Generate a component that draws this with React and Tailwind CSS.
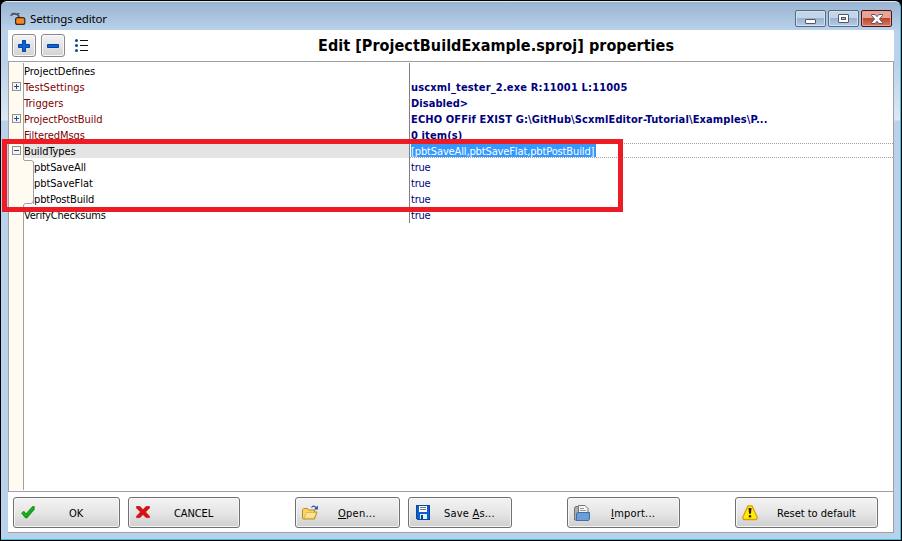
import React from "react";

const rows = [
  { name: "ProjectDefines", value: "" },
  { name: "TestSettings", red: true, sign: "+", bold: true, value: "uscxml_tester_2.exe R:11001 L:11005", nameTrack: "tracking-[0.08px]", track: "tracking-[0.17px]" },
  { name: "Triggers", red: true, bold: true, value: "Disabled>", nameTrack: "tracking-[0.05px]", track: "tracking-[0.05px]" },
  { name: "ProjectPostBuild", red: true, sign: "+", bold: true, value: "ECHO OFFif EXIST G:\\GitHub\\ScxmlEditor-Tutorial\\Examples\\P...", nameTrack: "tracking-[-0.06px]", track: "tracking-[0.12px]" },
  { name: "FilteredMsgs", red: true, bold: true, value: "0 item(s)", nameTrack: "tracking-[-0.08px]", track: "tracking-[0.12px]" },
  { name: "BuildTypes", sign: "-", selected: true, value: "[pbtSaveAll,pbtSaveFlat,pbtPostBuild]", nameTrack: "tracking-[-0.1px]", track: "tracking-[-0.13px]" },
  { name: "pbtSaveAll", child: true, value: "true", nameTrack: "tracking-[-0.1px]", track: "tracking-[-0.2px]" },
  { name: "pbtSaveFlat", child: true, value: "true", nameTrack: "tracking-[-0.03px]", track: "tracking-[-0.2px]" },
  { name: "pbtPostBuild", child: true, value: "true", nameTrack: "tracking-[-0.15px]", track: "tracking-[-0.2px]" },
  { name: "VerifyChecksums", value: "true", nameTrack: "tracking-[-0.2px]", track: "tracking-[-0.2px]" },
];

function Sign({ kind }) {
  return (
    <svg className="block h-[9px] w-[9px]" viewBox="0 0 9 9" shapeRendering="crispEdges">
      <rect x="0.5" y="0.5" width="8" height="8" fill="#f4f4f4" stroke="#919191" />
      <path d={kind === "+" ? "M2 4.5h5M4.5 2v5" : "M2 4.5h5"} stroke="#26479c" />
    </svg>
  );
}

function Row({ row }) {
  return (
    <div className="flex h-4 leading-[18px]">
      <div className="w-[14px] bg-[#fffbf0] pl-[3px] pt-[3px]">{row.sign && <Sign kind={row.sign} />}</div>
      <div className={"w-px " + (row.child ? "bg-[#fffbf0]" : "bg-[#a0a0a0]")} />
      {row.child && <div className="w-[10px] border-r border-[#a0a0a0] bg-[#fffbf0]" />}
      <div
        className={
          "whitespace-pre " +
          (row.child ? "w-[375px] " : "w-[385px] ") +
          (row.selected ? "h-[15px] bg-[#e4e4e4] " : "") +
          (row.red ? "text-[#800000] " : "text-black ") +
          (row.nameTrack || "")
        }
      >
        {row.name}
      </div>
      <div className="w-px bg-[#808080]" />
      <div
        className={
          "flex-1 whitespace-pre pl-px text-[#000080] " +
          (row.bold ? "font-bold " : "") +
          (row.selected ? "h-[15px] border-y border-dotted border-[#a0a0a0] leading-[16px] " : "") +
          (row.track || "")
        }
      >
        {row.selected ? <span className="block h-[13px] w-[185px] bg-[#3399ff] text-white">{row.value}</span> : row.value}
      </div>
    </div>
  );
}

function Tree() {
  return (
    <div className="relative flex h-[431px] flex-col border border-[#a0a0a0] pt-px">
      {rows.map((r) => (
        <Row key={r.name} row={r} />
      ))}
      <div className="flex h-[267px]">
        <div className="w-[15px] border-r border-[#a0a0a0] bg-[#fffbf0]" />
      </div>
      {/* rounded ends of the child bracket */}
      <svg className="absolute left-[14px] top-[97px] h-[49px] w-[12px]" viewBox="0 0 12 49" fill="none">
        <path d="M1 0h11v4H1z" fill="#fff" />
        <path d="M1 44h11v5H1z" fill="#fff" />
        <path d="M0 0 Q0.5 1.5 2 1.5 H8 Q10.500 1.500 10.500 4 V41 Q10.500 44.500 8 44.500 H2.500 Q0.500 44.500 0.500 47 V49 H0 Z" fill="#fffbf0" />
        <path d="M0.500 0 Q0.500 1.500 2 1.500 H8 Q10.500 1.500 10.500 4" stroke="#a0a0a0" />
        <path d="M10.500 41 Q10.500 44.500 8 44.500 H2.500 Q0.500 44.500 0.500 47 V49" stroke="#a0a0a0" />
      </svg>
      <div className="absolute left-[24px] top-[100px] h-[42px] w-px bg-[#a0a0a0]" />
    </div>
  );
}

function Button({ className, text, icon, iconClass }) {
  return (
    <div
      className={
        "flex h-[31px] items-center rounded-[3px] border border-[#707070] bg-linear-to-b from-[#f2f2f2] from-5% via-[#e6e6e6] via-50% to-[#cfcfcf] shadow-[inset_0_0_0_1px_#f6f6f6] " +
        className
      }
    >
      <div className={"w-4 shrink-0 " + iconClass}>{icon}</div>
      <div className="flex-1 whitespace-pre pt-0.5 leading-4">{text}</div>
    </div>
  );
}

function ToolButton({ children }) {
  return (
    <div className="flex h-[23px] w-6 items-center justify-center rounded-[3px] border border-[#8a8a8a] bg-linear-to-b from-[#f4f4f4] to-[#d2d2d2] shadow-[inset_0_0_0_1px_#f8f8f8]">
      {children}
    </div>
  );
}

const svg16 = { width: 16, height: 16, viewBox: "0 0 16 16", className: "block" };

const CheckIcon = () => (
  <svg {...svg16}>
    <path d="M1.500 8 L4 6.200 L6 8.800 L12.500 1.500 L14.300 1.500 L14.300 4.500 L7 13 L5.500 13 Z" fill="#0f9f0f" stroke="#0b860b" strokeWidth="0.6" />
    <path d="M3 7.500 L6 11 L13 3" stroke="#35c435" strokeWidth="0.8" fill="none" />
  </svg>
);

const CrossIcon = () => (
  <svg {...svg16}>
    <path d="M1.500 1.500 H5 L8 4.700 L11 1.500 H14.500 V3 L10.500 7 L14.500 11.300 V12.600 H11 L8 9.400 L5 12.600 H1.500 V11.300 L5.500 7 L1.500 3 Z" fill="#dc1010" stroke="#b00000" strokeWidth="0.6" />
  </svg>
);

const FolderIcon = () => (
  <svg {...svg16}>
    <path d="M0.500 13.500 V4.500 L1.500 3.500 H5.500 L6.500 5 H12.500 V7 H15 L12.500 14 H1.500 Z" fill="#f7d468" stroke="#b98a1c" />
    <path d="M2 13.300 L4.500 7.500 H14.500 L12 13.300 Z" fill="#ffe594" stroke="#d6a837" strokeWidth="0.7" />
    <path d="M9.500 2.500 Q11.500 -0.300 14 2.500" stroke="#164fa5" strokeWidth="1.200" fill="none" />
    <path d="M15.800 0.500 V4.500 H12 Z" fill="#164fa5" />
  </svg>
);

const SaveIcon = () => (
  <svg {...svg16} shapeRendering="crispEdges">
    <path d="M1 0h14v15H2l-1-1z" fill="#0a5fd0" />
    <path d="M1.500 0.500h13v14h-12l-1-1z" fill="none" stroke="#0a48a0" />
    <rect x="4" y="1" width="8" height="6" fill="#fff" />
    <path d="M5 2.500h6M5 4.500h6" stroke="#777" />
    <rect x="5" y="9" width="7" height="5" fill="#e8eef8" />
    <rect x="6" y="10" width="2" height="4" fill="#0a3c90" />
  </svg>
);

const ImportIcon = () => (
  <svg {...svg16}>
    <path d="M0.500 15 V3 L1.500 1.500 H5 V15 Z" fill="#a8adb3" stroke="#6b737c" />
    <path d="M4.500 8 V0.500 H11 L14 3.500 V8 Z" fill="#f4f4f4" stroke="#777" />
    <path d="M6 3.500h4M6 5.500h6" stroke="#999" />
    <path d="M2.500 15.500 V9 Q2.500 7.500 4 7.500 H15.500 V14 L14.500 15.500 Z" fill="#6c9dd4" stroke="#3f6da8" />
  </svg>
);

const WarningIcon = () => (
  <svg {...svg16}>
    <path d="M6 0.800 H10 L15.300 12.500 L14.500 14.500 H1.500 L0.700 12.500 Z" fill="#ffef00" stroke="#dd9a1c" strokeWidth="1.300" strokeLinejoin="round" />
    <path d="M6.500 3 H9.500 L9 8.800 H7 Z" fill="#332000" />
    <rect x="6.800" y="10.200" width="2.400" height="2.200" fill="#332000" />
  </svg>
);

function CaptionButton({ close, children }) {
  return (
    <div
      className={
        "flex h-[17px] w-[31px] items-center justify-center rounded-[2px] border " +
        (close
          ? "border-[#4a1016] bg-linear-to-b from-[#e6a697] from-45% via-[#bf4329] via-50% to-[#d5795f] shadow-[inset_0_0_0_1px_#e5a598]"
          : "border-[#566a84] bg-linear-to-b from-[#c3d5e9] from-45% via-[#9ab3cf] via-50% to-[#b5cce5] shadow-[inset_0_0_0_1px_#d3e1f0]")
      }
    >
      {children}
    </div>
  );
}

function TitleBar() {
  return (
    <div className="flex h-[28px] pl-[9px] pr-2">
      <svg className="mt-[10px] h-[14px] w-4" viewBox="0 0 16 14">
        <path d="M1.500 3 Q4 0.800 6.500 2.300 Q9 3 9 5.500" stroke="#4a4f55" strokeWidth="1.700" fill="none" />
        <path d="M0.500 4 L3 0.800 M7 1.800 L9.500 1.500" stroke="#4c5157" strokeWidth="1.200" />
        <rect x="5.600" y="5.600" width="9.200" height="6.800" rx="2" fill="#f98521" stroke="#39291d" strokeWidth="1.200" />
      </svg>
      <div className="ml-[4px] mt-[9px] flex-1 font-['Noto_Sans',sans-serif] text-[11.500px] leading-4 tracking-[-0.15px] text-black">Settings editor</div>
      <div className="mt-[8px] flex gap-[2px]">
        <CaptionButton>
          <div className="mt-[5px] h-[5px] w-[11px] rounded-[1px] border border-[#535666] bg-white" />
        </CaptionButton>
        <CaptionButton>
          <div className="flex h-[9px] w-[11px] items-center justify-center rounded-[1px] border border-[#535666] bg-white">
            <div className="h-[3px] w-[5px] border border-[#535666] bg-[#a9bfd8]" />
          </div>
        </CaptionButton>
        <CaptionButton close>
          <svg className="h-[10px] w-3" viewBox="0 0 12 10">
            <path d="M0.500 0.500 H4 L6 2.700 L8 0.500 H11.500 V1.500 L8.500 5 L11.500 8.500 V9.500 H8 L6 7.300 L4 9.500 H0.500 V8.500 L3.500 5 L0.500 1.500 Z" fill="#fff" stroke="#535666" />
          </svg>
        </CaptionButton>
      </div>
    </div>
  );
}

function Toolbar() {
  return (
    <div className="flex h-[31px] pl-1 pt-1">
      <ToolButton>
        <svg className="h-3 w-3" viewBox="0 0 12 12">
          <path d="M4.500 0.500h3v4h4v3h-4v4h-3v-4h-4v-3h4z" fill="#0866d8" stroke="#05429c" />
        </svg>
      </ToolButton>
      <div className="w-[5px]" />
      <ToolButton>
        <svg className="h-3 w-3" viewBox="0 0 12 12">
          <path d="M0.500 4.500h11v3h-11z" fill="#0866d8" stroke="#05429c" />
        </svg>
      </ToolButton>
      <svg className="ml-[9px] mt-[4px] h-[15px] w-[15px]" viewBox="0 0 15 15">
        <g fill="#0b469f">
          <circle cx="2.500" cy="2.500" r="1.500" />
          <circle cx="2.500" cy="7.500" r="1.500" />
          <circle cx="2.500" cy="12.500" r="1.500" />
        </g>
        <path d="M6 2.500h8M6 7.500h8M6 12.500h8" stroke="#111" />
      </svg>
      <div className="ml-[229px] whitespace-pre text-[16px] font-bold leading-[24px] tracking-[0.05px] text-black">Edit [ProjectBuildExample.sproj] properties</div>
    </div>
  );
}

function Footer() {
  return (
    <div className="flex h-[41px] border-b border-r border-[#a0a0a0] pl-[5px] pt-[5px]">
      <Button className="w-[107px]" icon={<CheckIcon />} iconClass="ml-[6px] mr-[33px]" text="OK" />
      <Button className="ml-2 w-[112px] tracking-[-0.1px]" icon={<CrossIcon />} iconClass="ml-[6px] mr-[23px]" text="CANCEL" />
      <Button className="ml-[55px] w-[105px] tracking-[0.25px]" icon={<FolderIcon />} iconClass="ml-[6px] mr-[20px]" text={<><u>O</u>pen...</>} />
      <Button className="ml-2 w-[104px] tracking-[0.2px]" icon={<SaveIcon />} iconClass="ml-[6px] mr-[13px]" text={<>Save <u>A</u>s...</>} />
      <Button className="ml-[55px] w-[113px] tracking-[0.2px]" icon={<ImportIcon />} iconClass="ml-[6px] mr-[21px]" text={<><u>I</u>mport...</>} />
      <Button className="ml-[55px] w-[143px]" icon={<WarningIcon />} iconClass="ml-[6px] mr-[19px]" text="Reset to default" />
    </div>
  );
}

export default function App() {
  return (
    <div className="relative h-[541px] w-[902px] overflow-hidden bg-black font-['DejaVu_Sans_Condensed','DejaVu_Sans',sans-serif] text-[11px] text-black">
      <div className="h-[540px] pl-px pr-px pt-px">
        <div className="h-[539px] rounded-t-[6px] border-b border-r border-t border-b-[#35c3dc] border-r-[#35c3dc] border-t-[#dfeaf5] bg-[linear-gradient(to_bottom,#99b4d1_0px,#b9d1ea_28px,#b9d1ea_60px,#dce8f5_118px,#b9d1ea_119px)]">
          <TitleBar />
          <div className="ml-[7px] flex h-[503px] w-[886px] flex-col bg-white">
            <Toolbar />
            <Tree />
            <Footer />
          </div>
        </div>
      </div>
      {/* highlight frame over the BuildTypes rows */}
      <div className="absolute left-[2px] top-[139px] h-[73px] w-[621px] border-5 border-[#ed1c24]" />
    </div>
  );
}
